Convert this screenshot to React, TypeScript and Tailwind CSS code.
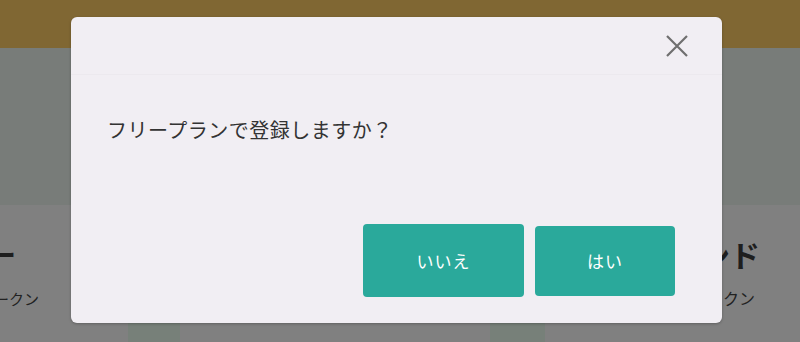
export default function App() {
  return (
    <div
      className="relative w-[800px] h-[342px] overflow-hidden bg-[#808080]"
      style={{ fontFamily: '"Noto Sans CJK JP", "Noto Sans", sans-serif' }}
    >
      {/* page behind the dimmed overlay */}
      <div className="h-[48px] bg-[#806733]" />
      <div className="h-[157px] bg-[#787c79]" />
      <div className="flex justify-between h-[137px]">
        <div className="flex flex-col">
          <div className="text-[28px] font-bold text-[#1e1e1e] leading-none mt-[35px] -ml-[12px]">ー</div>
          <div className="text-[15px] text-[#222] mt-[20px] -ml-[6px]">ークン</div>
          <div className="ml-[128px] mt-auto w-[52px] h-[19px] bg-[#778079]" />
        </div>
        <div className="flex flex-col items-start w-[310px]">
          <div className="text-[30px] font-bold text-[#1e1e1e] leading-none mt-[34px] ml-[210px]">ンド</div>
          <div className="text-[16px] text-[#222] mt-[17px] ml-[217px]">ークン</div>
          <div className="mt-auto w-[55px] h-[19px] bg-[#778079]" />
        </div>
      </div>

      {/* modal */}
      <div className="absolute left-[71px] top-[17px] w-[651px] h-[306px] rounded-[6px] bg-[#f1eef3] shadow-[0_1px_3px_rgba(0,0,0,0.25)] flex flex-col">
        <div className="h-[58px] flex justify-end items-start border-b border-[#ece9ee]">
          <button className="mt-[17px] mr-[33px] w-[24px] h-[24px] flex items-center justify-center">
            <svg width="24" height="24" viewBox="0 0 24 24" fill="none" stroke="#6f6f6f" strokeWidth="2.2">
              <path d="M2 2 L22 22 M22 2 L2 22" />
            </svg>
          </button>
        </div>
        <div className="pl-[36px] pt-[45px] text-[20px] text-[#333] leading-none tracking-[0.5px]">
          フリープランで登録しますか？
        </div>
        <div className="mt-auto mb-[26px] flex justify-end items-center gap-[11px] pr-[47px]">
          <button className="w-[161px] h-[73px] rounded-[4px] bg-[#2aa99b] text-white text-[17px] tracking-[1px]">
            いいえ
          </button>
          <button className="w-[140px] h-[70px] rounded-[4px] bg-[#2aa99b] text-white text-[17px] tracking-[1px]">
            はい
          </button>
        </div>
      </div>
    </div>
  );
}
